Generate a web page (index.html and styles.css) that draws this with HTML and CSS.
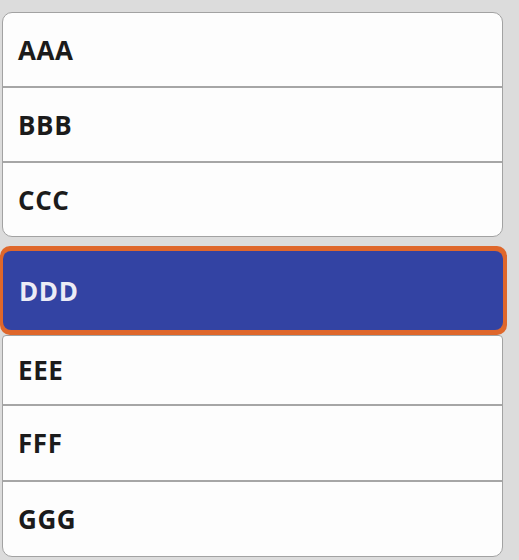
FILE: index.html
```html
<!DOCTYPE html>
<html>
<head>
<meta charset="utf-8">
<link rel="stylesheet" href="styles.css">
</head>
<body>
<div class="page">
  <div class="card">
    <div class="row">AAA</div>
    <div class="row">BBB</div>
    <div class="row">CCC</div>
  </div>
  <div class="selected">
    <div class="selected-inner">DDD</div>
  </div>
  <div class="card card-lower">
    <div class="row">EEE</div>
    <div class="row">FFF</div>
    <div class="row">GGG</div>
  </div>
</div>
</body>
</html>
```
FILE: styles.css
```css
html, body {
  margin: 0;
  padding: 0;
  background: #dcdcdc;
}
.page {
  width: 519px;
  height: 560px;
  padding-top: 12px;
  box-sizing: border-box;
  display: flex;
  flex-direction: column;
  font-family: "Open Sans", "Noto Sans", sans-serif;
  font-weight: 700;
  font-size: 26px;
  letter-spacing: 0.6px;
  color: #1b1b1b;
}
.card {
  margin-left: 2px;
  width: 501px;
  box-sizing: border-box;
  border: 1.5px solid #a2a2a2;
  border-radius: 10px;
  background: #fdfdfd;
  overflow: hidden;
}
.row {
  height: 73px;
  display: flex;
  align-items: center;
  padding-left: 15px;
  border-bottom: 2px solid #a6a6a6;
}
.row:last-child {
  border-bottom: none;
}
.selected {
  margin-top: 9px;
  width: 507px;
  box-sizing: border-box;
  padding: 5px 4px 5px 3px;
  background: #df672b;
  border-radius: 10px;
}
.selected-inner {
  height: 79px;
  display: flex;
  align-items: center;
  padding-left: 16px;
  background: #3343a3;
  border-radius: 8px;
  color: #ececf6;
}
.card-lower {
  border-top-left-radius: 4px;
  border-top-right-radius: 4px;
}
.card-lower .row {
  height: 74px;
}
.card-lower .row:first-child {
  height: 68px;
}
```
